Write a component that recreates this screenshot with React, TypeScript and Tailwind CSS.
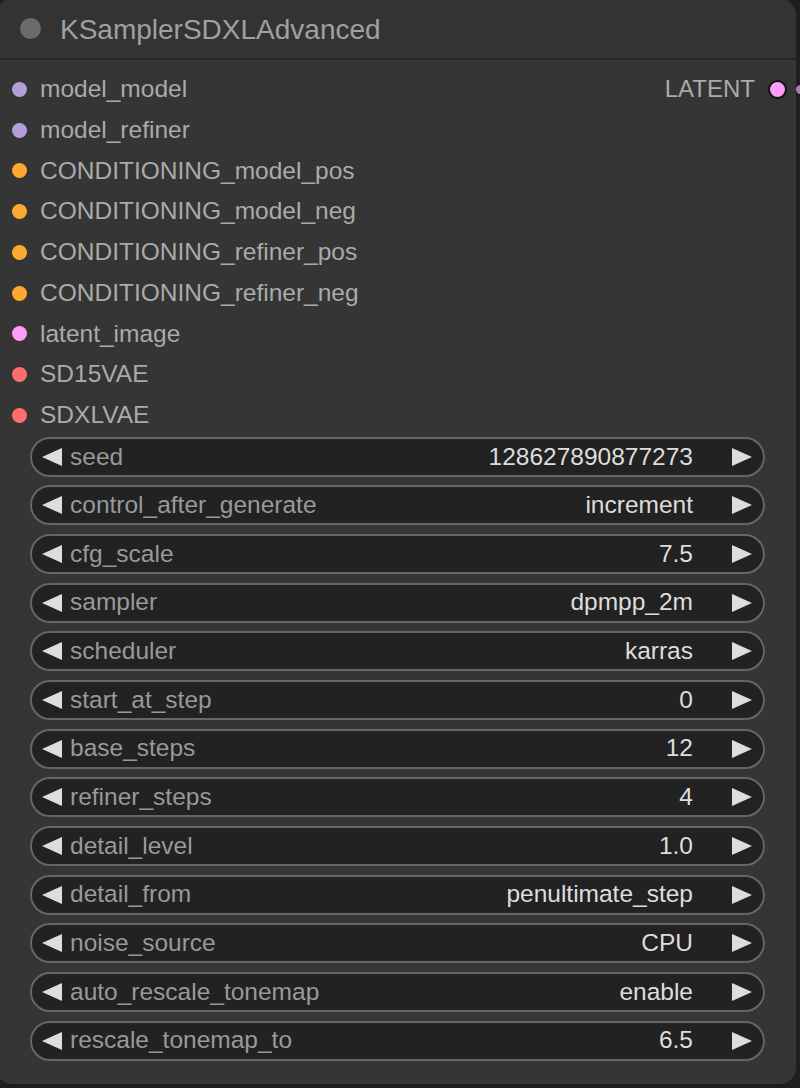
import React from "react";

const inputs: { name: string; color: string }[] = [
  { name: "model_model", color: "#b39ddb" },
  { name: "model_refiner", color: "#b39ddb" },
  { name: "CONDITIONING_model_pos", color: "#ffa931" },
  { name: "CONDITIONING_model_neg", color: "#ffa931" },
  { name: "CONDITIONING_refiner_pos", color: "#ffa931" },
  { name: "CONDITIONING_refiner_neg", color: "#ffa931" },
  { name: "latent_image", color: "#ff9cf9" },
  { name: "SD15VAE", color: "#ff6e6e" },
  { name: "SDXLVAE", color: "#ff6e6e" },
];

const widgets: [string, string][] = [
  ["seed", "128627890877273"],
  ["control_after_generate", "increment"],
  ["cfg_scale", "7.5"],
  ["sampler", "dpmpp_2m"],
  ["scheduler", "karras"],
  ["start_at_step", "0"],
  ["base_steps", "12"],
  ["refiner_steps", "4"],
  ["detail_level", "1.0"],
  ["detail_from", "penultimate_step"],
  ["noise_source", "CPU"],
  ["auto_rescale_tonemap", "enable"],
  ["rescale_tonemap_to", "6.5"],
];

function LeftArrow() {
  return (
    <svg width="20" height="18" viewBox="0 0 20 18" className="shrink-0">
      <polygon points="20,0 20,18 0,9" fill="#dddddd" />
    </svg>
  );
}

function RightArrow() {
  return (
    <svg width="20" height="18" viewBox="0 0 20 18" className="shrink-0">
      <polygon points="0,0 0,18 20,9" fill="#dddddd" />
    </svg>
  );
}

export default function App() {
  return (
    <div
      className="w-[800px] h-[1088px] overflow-hidden bg-[#1e1e1e] relative"
      style={{ fontFamily: '"Liberation Sans", Arial, sans-serif' }}
    >
      <div className="ml-[-4px] mt-[-1px] w-[800px] h-[1085px] rounded-[16px] bg-[#353535] flex flex-col">
        {/* title */}
        <div className="h-[61px] shrink-0 flex items-center pl-[24px] bg-[#333333] rounded-t-[16px] border-b-2 border-[#282828]">
          <div className="w-[21px] h-[21px] rounded-full bg-[#6a6a6a]" />
          <span className="ml-[19px] text-[28px] text-[#a0a0a0] leading-none mt-[2px]">
            KSamplerSDXLAdvanced
          </span>
        </div>
        {/* slots */}
        <div className="pt-[9px] flex flex-col relative">
          {inputs.map((s, i) => (
            <div key={s.name} className="h-[40.75px] flex items-center pl-[16px] pr-[9px]">
              <div
                className="w-[15px] h-[15px] rounded-full shrink-0"
                style={{ backgroundColor: s.color }}
              />
              <span className="ml-[13px] text-[24.5px] leading-none text-[#aaaaaa]">{s.name}</span>
              {i === 0 && (
                <div className="ml-auto flex items-center">
                  <span className="text-[24px] leading-none text-[#aaaaaa]">LATENT</span>
                  <div className="ml-[13px] w-[19px] h-[19px] rounded-full bg-[#ff9cf9] border-[2.5px] border-[#111111]" />
                </div>
              )}
            </div>
          ))}
        </div>
        {/* widgets */}
        <div className="mt-[1px] flex flex-col gap-[8.67px] pl-[34px] pr-[31px]">
          {widgets.map(([label, value]) => (
            <div
              key={label}
              className="h-[40px] rounded-full border-2 border-[#666666] bg-[#222222] flex items-center pl-[10px] pr-[11px]"
            >
              <LeftArrow />
              <span className="ml-[8px] text-[24.5px] leading-none text-[#999999]">{label}</span>
              <span className="ml-auto text-[24.5px] leading-none text-[#dddddd]">{value}</span>
              <span className="ml-[39px]">
                <RightArrow />
              </span>
            </div>
          ))}
        </div>
      </div>
      <div className="absolute left-[796px] top-[85px] w-[9px] h-[9px] rounded-full bg-[#b57bb1]" />
    </div>
  );
}
